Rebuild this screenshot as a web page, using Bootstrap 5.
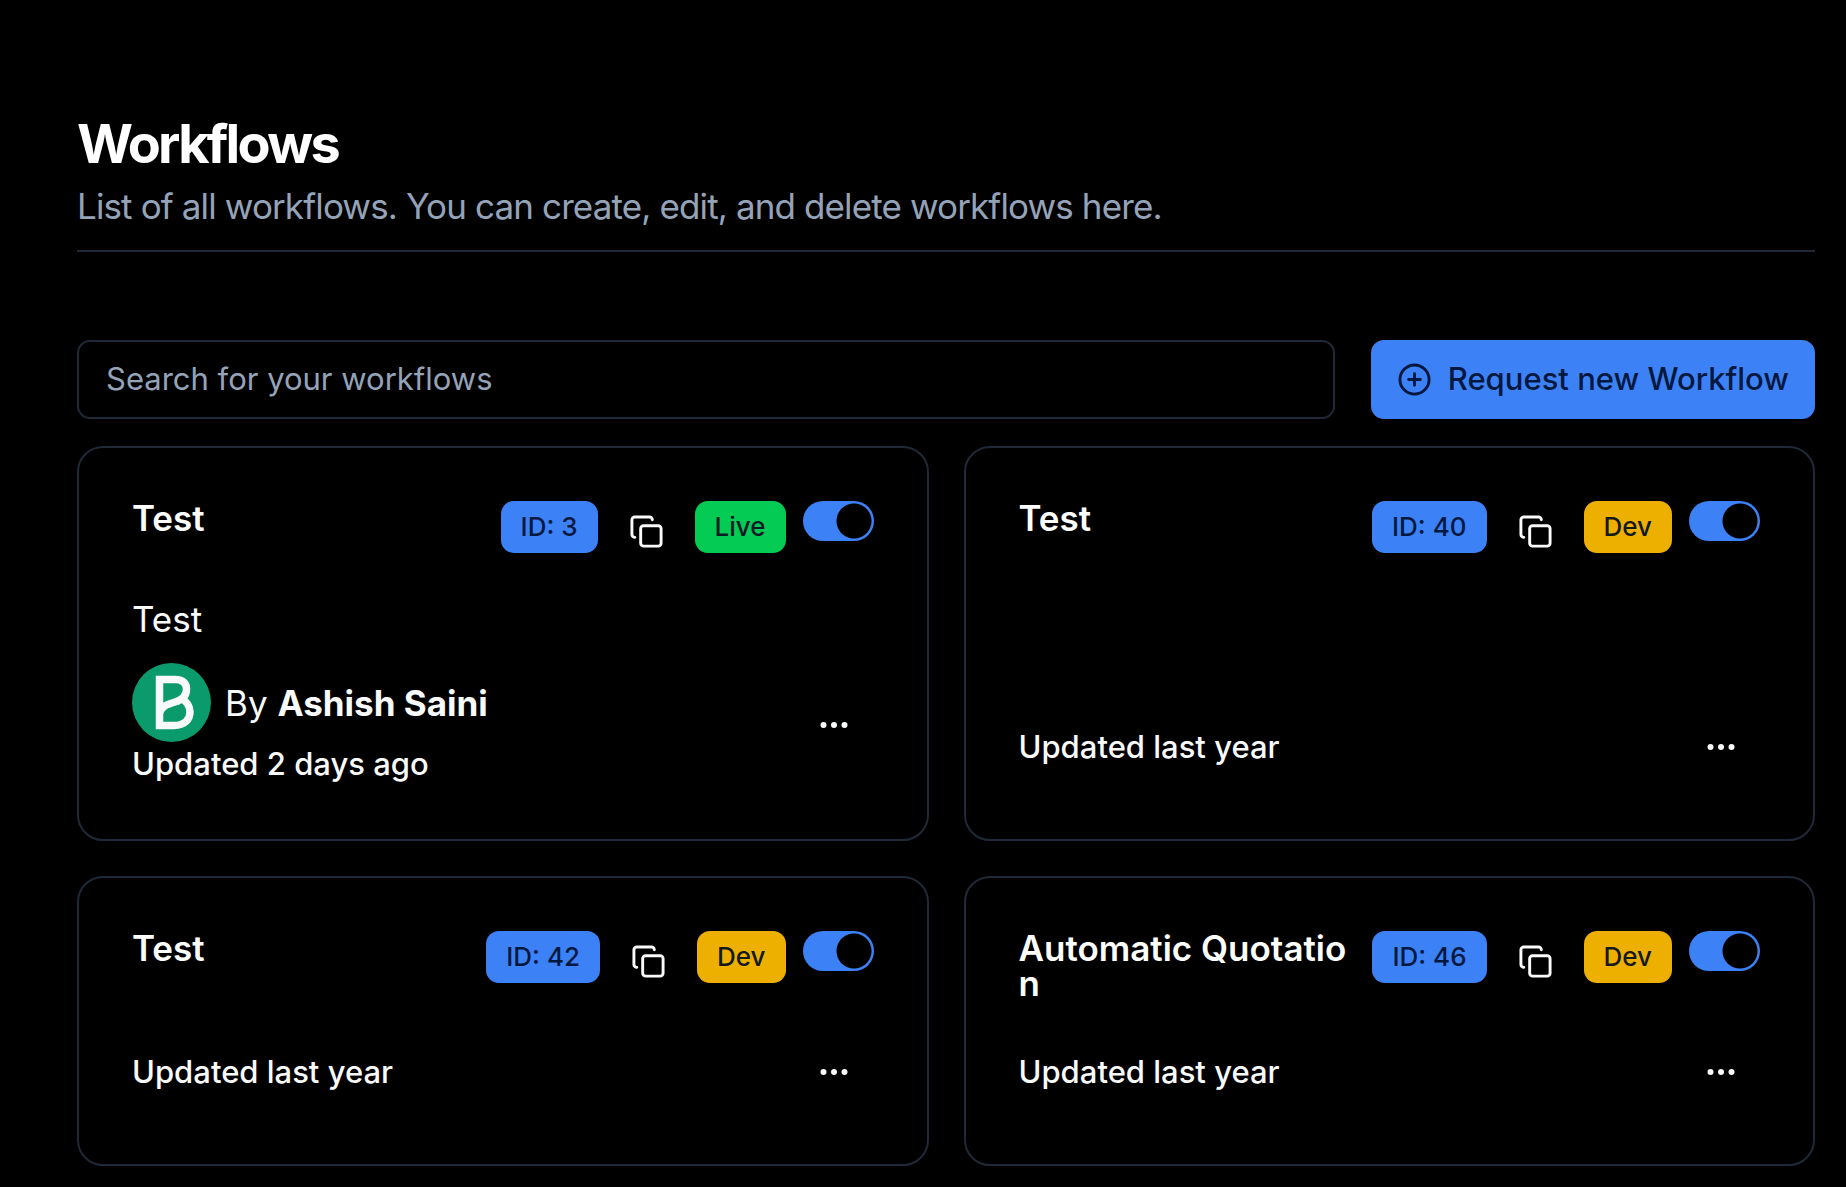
<!DOCTYPE html>
<html lang="en" data-bs-theme="dark">
<head>
<meta charset="utf-8">
<meta name="viewport" content="width=device-width, initial-scale=1">
<title>Workflows</title>
<link href="https://cdn.jsdelivr.net/npm/bootstrap@5.3.0/dist/css/bootstrap.min.css" rel="stylesheet">
<style>
  :root { --line: #1f2937; --ink: #f9fafb; --muted: #94a3b8; --blue: #3c82f6; --navy: #02183f; }
  body { background: #000; color: var(--ink); font-family: Inter, "Liberation Sans", sans-serif; font-size: 31px; line-height: 44px; }
  .page { padding: 112px 31px 20px 77px; }
  .page-head { border-bottom: 2px solid var(--line); padding-bottom: 16px; }
  .page-title { font-size: 54px; line-height: 64px; font-weight: 700; letter-spacing: -0.05em; margin: 0 0 2px; }
  .page-sub { font-size: 35px; line-height: 56px; color: var(--muted); letter-spacing: -0.025em; margin: 0; }
  .tools { gap: 36px; margin-top: 88px; margin-bottom: 27px; }
  .search-box, .search-box:focus { min-height: 79px; border: 2px solid var(--line); border-radius: 13px; background: #000; color: var(--ink); font-size: 31px; padding: 0 27px; }
  .search-box::placeholder { color: var(--muted); opacity: 1; }
  .btn-request { --bs-btn-bg: var(--blue); --bs-btn-color: var(--navy); --bs-btn-hover-bg: #3575dd; --bs-btn-hover-color: var(--navy); min-height: 79px; border: 0; border-radius: 13px; font-size: 31px; font-weight: 500; padding: 0 26px; gap: 16px; }
  .flows { --bs-gutter-x: 35px; --bs-gutter-y: 35px; }
  .flow { background: #000; border: 2px solid var(--line); border-radius: 26px; padding: 53px; color: var(--ink); }
  .flow-head { margin-bottom: 31px; gap: 18px; }
  .flow-name { font-size: 35px; line-height: 35px; font-weight: 600; word-break: break-all; margin: 0; }
  .tag { height: 52px; border-radius: 13px; padding: 0 20px; font-size: 26px; line-height: 52px; font-weight: 500; }
  .tag-id { background: var(--blue); color: var(--navy); }
  .tag-live { background: #04cb54; color: #0b1b24; }
  .tag-dev { background: #eeb000; color: #14191c; }
  .copy-btn { color: var(--ink); padding: 13px 31px 0; border: 0; line-height: 1; }
  .toggle, .toggle:checked { width: 71px !important; height: 40px; margin: 0 0 0 17px !important; border: 0; background-color: var(--blue); background-image: radial-gradient(circle at 51px 20px, #000 17px, transparent 18px) !important; background-size: 100% 100%; }
  .flow-text { font-size: 35px; line-height: 55px; padding: 8px 0 16px; margin: 0; }
  .by { font-size: 35px; gap: 14px; }
  .updated { font-weight: 500; }
  .more-btn { width: 79px; height: 79px; color: var(--ink); border: 0; padding: 0; }
</style>
</head>
<body>
<svg class="d-none" aria-hidden="true">
  <symbol id="copy" viewBox="0 0 24 24" fill="none" stroke="currentColor" stroke-width="2" stroke-linecap="round" stroke-linejoin="round"><rect x="8" y="8" width="14" height="14" rx="2"/><path d="M4 16c-1.100 0-2-.9-2-2V4c0-1.100.9-2 2-2h10c1.100 0 2 .9 2 2"/></symbol>
  <symbol id="dots" viewBox="0 0 24 24" fill="currentColor"><circle cx="5" cy="12" r="2"/><circle cx="12" cy="12" r="2"/><circle cx="19" cy="12" r="2"/></symbol>
</svg>
<main class="container-fluid page">
  <header class="page-head">
    <h1 class="page-title">Workflows</h1>
    <p class="page-sub">List of all workflows. You can create, edit, and delete workflows here.</p>
  </header>

  <div class="tools d-flex">
    <input type="search" class="form-control search-box flex-grow-1" placeholder="Search for your workflows" aria-label="Search for your workflows">
    <button type="button" class="btn btn-request d-flex align-items-center flex-shrink-0">
      <svg width="35" height="35" viewBox="0 0 24 24" fill="none" stroke="currentColor" stroke-width="2" stroke-linecap="round" aria-hidden="true"><circle cx="12" cy="12" r="10"/><path d="M8 12h8M12 8v8"/></svg>
      Request new Workflow
    </button>
  </div>

  <div class="row flows">
    <div class="col-6">
      <article class="card flow h-100">
        <div class="flow-head d-flex align-items-start">
          <h2 class="flow-name flex-grow-1">Test</h2>
          <div class="d-flex align-items-start flex-shrink-0">
            <span class="tag tag-id">ID: 3</span>
            <button type="button" class="btn copy-btn" aria-label="Copy ID"><svg class="d-block" width="35" height="35"><use href="#copy"/></svg></button>
            <span class="tag tag-live">Live</span>
            <div class="form-check form-switch p-0 m-0 d-flex"><input class="form-check-input toggle" type="checkbox" role="switch" aria-label="Workflow 3 enabled" checked></div>
          </div>
        </div>
        <p class="flow-text">Test</p>
        <div class="d-flex justify-content-between align-items-center mt-auto">
          <div>
            <div class="by d-flex align-items-center">
              <svg width="79" height="79" viewBox="0 0 79 79" role="img" aria-label="Ashish Saini"><circle cx="39.5" cy="39.5" r="39.5" fill="#0a9a6c"/><path d="M27.500 50V16.500H43C52 16.500 54.500 21 54.500 26C54.500 33 50 37 43 39C34 41.500 29 44 27.500 51V62.500H42C53 62.500 58 56 58 49C58 43 55 39 50 35.500" fill="none" stroke="#f8fafa" stroke-width="7.500"/></svg>
              <span>By <strong>Ashish Saini</strong></span>
            </div>
            <div class="updated">Updated 2 days ago</div>
          </div>
          <button type="button" class="btn more-btn" aria-label="More actions"><svg width="36" height="36"><use href="#dots"/></svg></button>
        </div>
      </article>
    </div>

    <div class="col-6">
      <article class="card flow h-100">
        <div class="flow-head d-flex align-items-start">
          <h2 class="flow-name flex-grow-1">Test</h2>
          <div class="d-flex align-items-start flex-shrink-0">
            <span class="tag tag-id">ID: 40</span>
            <button type="button" class="btn copy-btn" aria-label="Copy ID"><svg class="d-block" width="35" height="35"><use href="#copy"/></svg></button>
            <span class="tag tag-dev">Dev</span>
            <div class="form-check form-switch p-0 m-0 d-flex"><input class="form-check-input toggle" type="checkbox" role="switch" aria-label="Workflow 40 enabled" checked></div>
          </div>
        </div>
        <div class="d-flex justify-content-between align-items-center mt-auto">
          <div class="updated">Updated last year</div>
          <button type="button" class="btn more-btn" aria-label="More actions"><svg width="36" height="36"><use href="#dots"/></svg></button>
        </div>
      </article>
    </div>

    <div class="col-6">
      <article class="card flow h-100">
        <div class="flow-head d-flex align-items-start">
          <h2 class="flow-name flex-grow-1">Test</h2>
          <div class="d-flex align-items-start flex-shrink-0">
            <span class="tag tag-id">ID: 42</span>
            <button type="button" class="btn copy-btn" aria-label="Copy ID"><svg class="d-block" width="35" height="35"><use href="#copy"/></svg></button>
            <span class="tag tag-dev">Dev</span>
            <div class="form-check form-switch p-0 m-0 d-flex"><input class="form-check-input toggle" type="checkbox" role="switch" aria-label="Workflow 42 enabled" checked></div>
          </div>
        </div>
        <div class="d-flex justify-content-between align-items-center mt-auto">
          <div class="updated">Updated last year</div>
          <button type="button" class="btn more-btn" aria-label="More actions"><svg width="36" height="36"><use href="#dots"/></svg></button>
        </div>
      </article>
    </div>

    <div class="col-6">
      <article class="card flow h-100">
        <div class="flow-head d-flex align-items-start">
          <h2 class="flow-name flex-grow-1">Automatic Quotation</h2>
          <div class="d-flex align-items-start flex-shrink-0">
            <span class="tag tag-id">ID: 46</span>
            <button type="button" class="btn copy-btn" aria-label="Copy ID"><svg class="d-block" width="35" height="35"><use href="#copy"/></svg></button>
            <span class="tag tag-dev">Dev</span>
            <div class="form-check form-switch p-0 m-0 d-flex"><input class="form-check-input toggle" type="checkbox" role="switch" aria-label="Workflow 46 enabled" checked></div>
          </div>
        </div>
        <div class="d-flex justify-content-between align-items-center mt-auto">
          <div class="updated">Updated last year</div>
          <button type="button" class="btn more-btn" aria-label="More actions"><svg width="36" height="36"><use href="#dots"/></svg></button>
        </div>
      </article>
    </div>
  </div>
</main>
<script src="https://cdn.jsdelivr.net/npm/bootstrap@5.3.0/dist/js/bootstrap.bundle.min.js"></script>
</body>
</html>
